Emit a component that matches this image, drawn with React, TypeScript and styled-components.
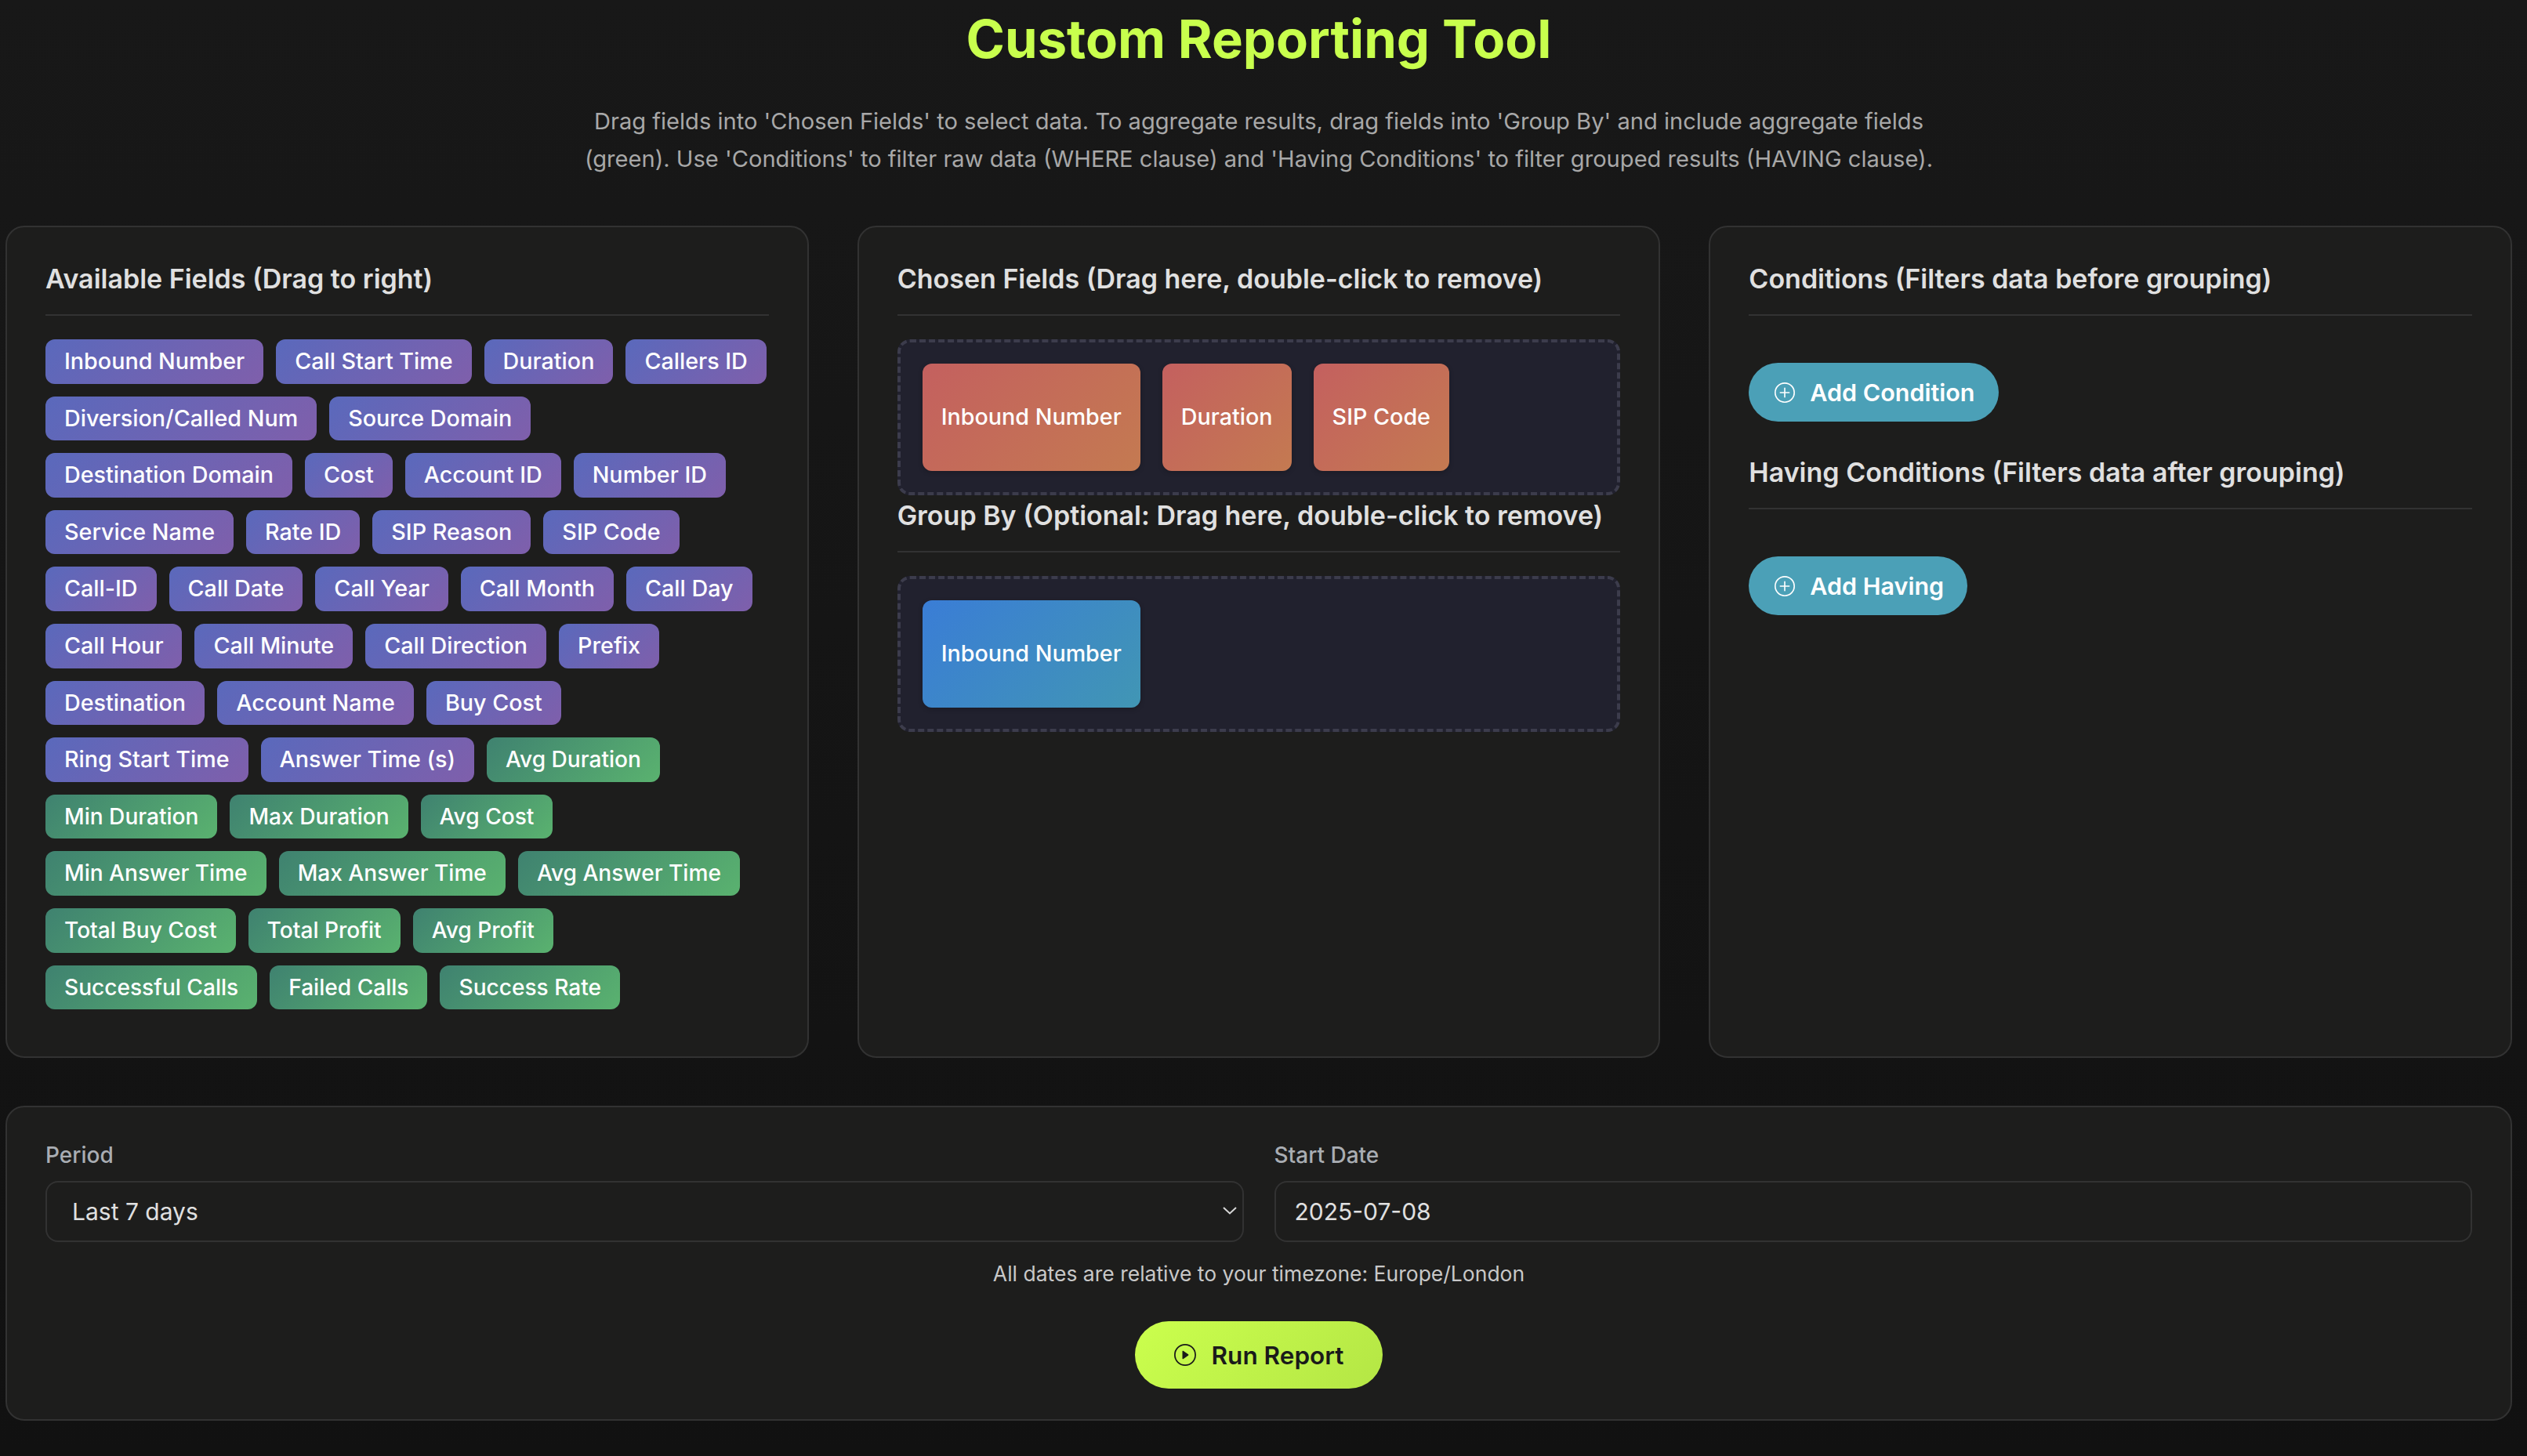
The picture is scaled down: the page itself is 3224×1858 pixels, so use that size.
import * as React from 'react';
import styled, { createGlobalStyle } from 'styled-components';
import { BsPlusCircle, BsPlayCircle } from 'react-icons/bs';

//#########
// Style
//#########
const GlobalStyle = createGlobalStyle`
  html, body {
    margin: 0;
    min-height: 100%;
    background: #141414;
  }
  body {
    font-family: Inter, "Noto Sans", "Liberation Sans", sans-serif;
    color: #e0e0e0;
  }
  * { box-sizing: border-box; }
`;

const Page = styled.div`
  min-height: 1858px;
  padding: 0 19px 45px 7px;
  background: linear-gradient(180deg, #181818 0%, #111111 100%);
`;

const Title = styled.h1`
  margin: 0;
  font-size: 66.9px;
  line-height: 100px;
  font-weight: 700;
  text-align: center;
  color: #c8ff4d;
`;

const Description = styled.p`
  margin: 31px 0 61px;
  font-size: 29.1px;
  line-height: 48px;
  text-align: center;
  color: #a8a8a8;
`;

const Columns = styled.div`
  display: grid;
  grid-template-columns: repeat(3, 1fr);
  gap: 62px;
`;

const Panel = styled.section`
  background: #1d1d1c;
  border: 2px solid #323232;
  border-radius: 24px;
  padding: 48px 49px;
`;

const SectionTitle = styled.h3<{ $spaced?: boolean }>`
  margin: ${(props) => (props.$spaced ? '8px' : '0')} 0 30px;
  padding-bottom: 27px;
  border-bottom: 2px solid #323232;
  font-size: 34px;
  line-height: 36px;
  font-weight: 600;
  color: #e0e0e0;
  white-space: nowrap;
`;

const FieldList = styled.div`
  display: flex;
  flex-wrap: wrap;
  gap: 16px;
  padding-bottom: 12px;
`;

const gradients = {
  field: 'linear-gradient(135deg, #5a69bc, #7f5fab)',
  aggregate: 'linear-gradient(135deg, #3f8270, #5ab26f)',
  chosen: 'linear-gradient(135deg, #c4605f, #c47a51)',
  group: 'linear-gradient(135deg, #3a7dd6, #4196b4)',
};

type FieldKind = keyof typeof gradients;

const Pill = styled.div<{ $kind: FieldKind }>`
  padding: 8px 24px;
  border-radius: 12px;
  background: ${(props) => gradients[props.$kind]};
  color: #ffffff;
  font-size: ${(props) => (props.$kind === 'aggregate' ? '28.1px' : '28.7px')};
  line-height: 40.6px;
  font-weight: 500;
  white-space: nowrap;
`;

const DropZone = styled.div`
  display: flex;
  gap: 28px;
  height: 199px;
  padding: 27px 28px;
  background: #21212e;
  border: 4px dashed #3c3c4c;
  border-radius: 16px;
`;

const Chip = styled(Pill)`
  display: flex;
  align-items: center;
  box-shadow: 0 2px 6px rgba(0, 0, 0, 0.2);
`;

const AddButton = styled.button`
  display: flex;
  align-items: center;
  gap: 19px;
  height: 75px;
  margin: 60px 0 47px;
  padding: 0 30px 0 33px;
  border: none;
  border-radius: 38px;
  background: #4ba0b7;
  color: #ffffff;
  font-family: inherit;
  font-size: 30.5px;
  font-weight: 600;
`;

const SectionBlock = styled.div`
  & > ${SectionTitle} { margin-bottom: 0; }
`;

const SettingsPanel = styled(Panel)`
  margin-top: 61px;
  padding-bottom: 39px;
`;

const SettingsGrid = styled.div`
  display: grid;
  grid-template-columns: 1fr 1fr;
  gap: 39px;
`;

const Label = styled.label`
  display: block;
  margin-bottom: 20px;
  font-size: 28px;
  line-height: 26px;
  font-weight: 500;
  color: #a9adb3;
`;

const SelectWrap = styled.div`
  position: relative;
`;

const inputStyles = `
  display: block;
  width: 100%;
  height: 78px;
  border: 2px solid #323232;
  border-radius: 16px;
  background: #1d1d1c;
  color: #e0e0e0;
  font-family: inherit;
  font-size: 30px;
  outline: none;
`;

const Select = styled.select`
  ${inputStyles}
  padding: 0 32px;
  appearance: none;
`;

const DateInput = styled.input`
  ${inputStyles}
  padding: 0 24px;
`;

const Caret = styled.svg`
  position: absolute;
  top: 33px;
  right: 9px;
  pointer-events: none;
`;

const Note = styled.p`
  margin: 24px 0 45px;
  font-size: 26.5px;
  line-height: 32px;
  text-align: center;
  color: #c8c8c8;
`;

const RunButton = styled.button`
  display: flex;
  align-items: center;
  gap: 20px;
  height: 86px;
  margin: 0 auto;
  padding: 0 50px;
  border: none;
  border-radius: 43px;
  background: linear-gradient(135deg, #cbff4d, #b4e645);
  color: #1a1a1a;
  font-family: inherit;
  font-size: 31.5px;
  font-weight: 600;
`;

//#############################################################
// Constants
//#############################################################
const plainFields = [
  'Inbound Number', 'Call Start Time', 'Duration', 'Callers ID',
  'Diversion/Called Num', 'Source Domain', 'Destination Domain', 'Cost',
  'Account ID', 'Number ID', 'Service Name', 'Rate ID', 'SIP Reason', 'SIP Code',
  'Call-ID', 'Call Date', 'Call Year', 'Call Month', 'Call Day', 'Call Hour',
  'Call Minute', 'Call Direction', 'Prefix', 'Destination', 'Account Name',
  'Buy Cost', 'Ring Start Time', 'Answer Time (s)',
];

const aggregateFields = [
  'Avg Duration', 'Min Duration', 'Max Duration', 'Avg Cost', 'Min Answer Time',
  'Max Answer Time', 'Avg Answer Time', 'Total Buy Cost', 'Total Profit',
  'Avg Profit', 'Successful Calls', 'Failed Calls', 'Success Rate',
];

//#######
// App
//#######
const App = () => {
  return (
    <Page>
      <GlobalStyle />
      <Title>Custom Reporting Tool</Title>
      <Description>
        Drag fields into 'Chosen Fields' to select data. To aggregate results, drag fields into 'Group By' and include aggregate fields
        <br />
        (green). Use 'Conditions' to filter raw data (WHERE clause) and 'Having Conditions' to filter grouped results (HAVING clause).
      </Description>

      <Columns>
        <Panel>
          <SectionTitle>Available Fields (Drag to right)</SectionTitle>
          <FieldList>
            {plainFields.map((name) => (
              <Pill key={name} $kind="field">{name}</Pill>
            ))}
            {aggregateFields.map((name) => (
              <Pill key={name} $kind="aggregate">{name}</Pill>
            ))}
          </FieldList>
        </Panel>

        <Panel>
          <SectionTitle>Chosen Fields (Drag here, double-click to remove)</SectionTitle>
          <DropZone>
            <Chip $kind="chosen">Inbound Number</Chip>
            <Chip $kind="chosen">Duration</Chip>
            <Chip $kind="chosen">SIP Code</Chip>
          </DropZone>
          <SectionTitle $spaced>Group By (Optional: Drag here, double-click to remove)</SectionTitle>
          <DropZone>
            <Chip $kind="group">Inbound Number</Chip>
          </DropZone>
        </Panel>

        <Panel>
          <SectionBlock>
            <SectionTitle>Conditions (Filters data before grouping)</SectionTitle>
            <AddButton type="button"><BsPlusCircle size={26} /> Add Condition</AddButton>
          </SectionBlock>
          <SectionBlock>
            <SectionTitle>Having Conditions (Filters data after grouping)</SectionTitle>
            <AddButton type="button"><BsPlusCircle size={26} /> Add Having</AddButton>
          </SectionBlock>
        </Panel>
      </Columns>

      <SettingsPanel>
        <SettingsGrid>
          <div>
            <Label htmlFor="period">Period</Label>
            <SelectWrap>
              <Select id="period" defaultValue="7">
                <option value="7">Last 7 days</option>
              </Select>
              <Caret width="18" height="10" viewBox="0 0 18 10" fill="none">
                <path d="M1 1l8 7.5L17 1" stroke="#d8d8d8" strokeWidth="2" />
              </Caret>
            </SelectWrap>
          </div>
          <div>
            <Label htmlFor="start">Start Date</Label>
            <DateInput id="start" type="text" defaultValue="2025-07-08" />
          </div>
        </SettingsGrid>
        <Note>All dates are relative to your timezone: Europe/London</Note>
        <RunButton type="button"><BsPlayCircle size={28} /> Run Report</RunButton>
      </SettingsPanel>
    </Page>
  );
};

export default App;
